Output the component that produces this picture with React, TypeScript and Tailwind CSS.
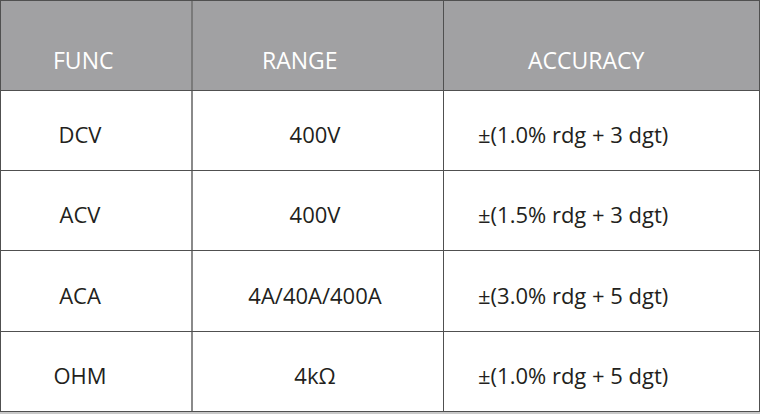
import React from "react";

const rows = [
  ["DCV", "400V", "±(1.0% rdg + 3 dgt)"],
  ["ACV", "400V", "±(1.5% rdg + 3 dgt)"],
  ["ACA", "4A/40A/400A", "±(3.0% rdg + 5 dgt)"],
  ["OHM", "4kΩ", "±(1.0% rdg + 5 dgt)"],
];

export default function App() {
  return (
    <div
      className="w-[760px] h-[414px] bg-white text-[#231f20]"
      style={{ fontFamily: '"Open Sans", "Noto Sans", sans-serif' }}
    >
      <div className="w-[760px] border-t border-[#505050]">
        <div className="grid grid-cols-[193px_251px_316px] h-[90px] bg-[#a1a1a3] text-white text-[23px] border-b border-[#505050]">
          <div className="border-l border-[#505050] border-r-2 border-r-[#7a7a7a] flex items-center pt-[30px] pl-[52px]">FUNC</div>
          <div className="border-r border-[#505050] flex items-center pt-[30px] pl-[69px]">RANGE</div>
          <div className="border-r border-[#505050] flex items-center pt-[30px] pl-[84px]">ACCURACY</div>
        </div>
        {rows.map((r, i) => (
          <div
            key={i}
            className={`grid grid-cols-[193px_251px_316px] text-[22px] border-b border-[#505050] ${i === 2 ? "h-[81px]" : "h-[80px]"}`}
          >
            <div className="border-l border-[#505050] border-r-2 border-r-[#8a8a8a] flex items-center justify-center pt-[8px] pr-[32px]">{r[0]}</div>
            <div className="border-r border-[#505050] flex items-center justify-center pt-[8px] pr-[6px]">{r[1]}</div>
            <div className="border-r border-[#505050] flex items-center pt-[8px] pl-[34px]">{r[2]}</div>
          </div>
        ))}
      </div>
      <div className="h-[2px] bg-[#c8c8c8]" />
    </div>
  );
}
